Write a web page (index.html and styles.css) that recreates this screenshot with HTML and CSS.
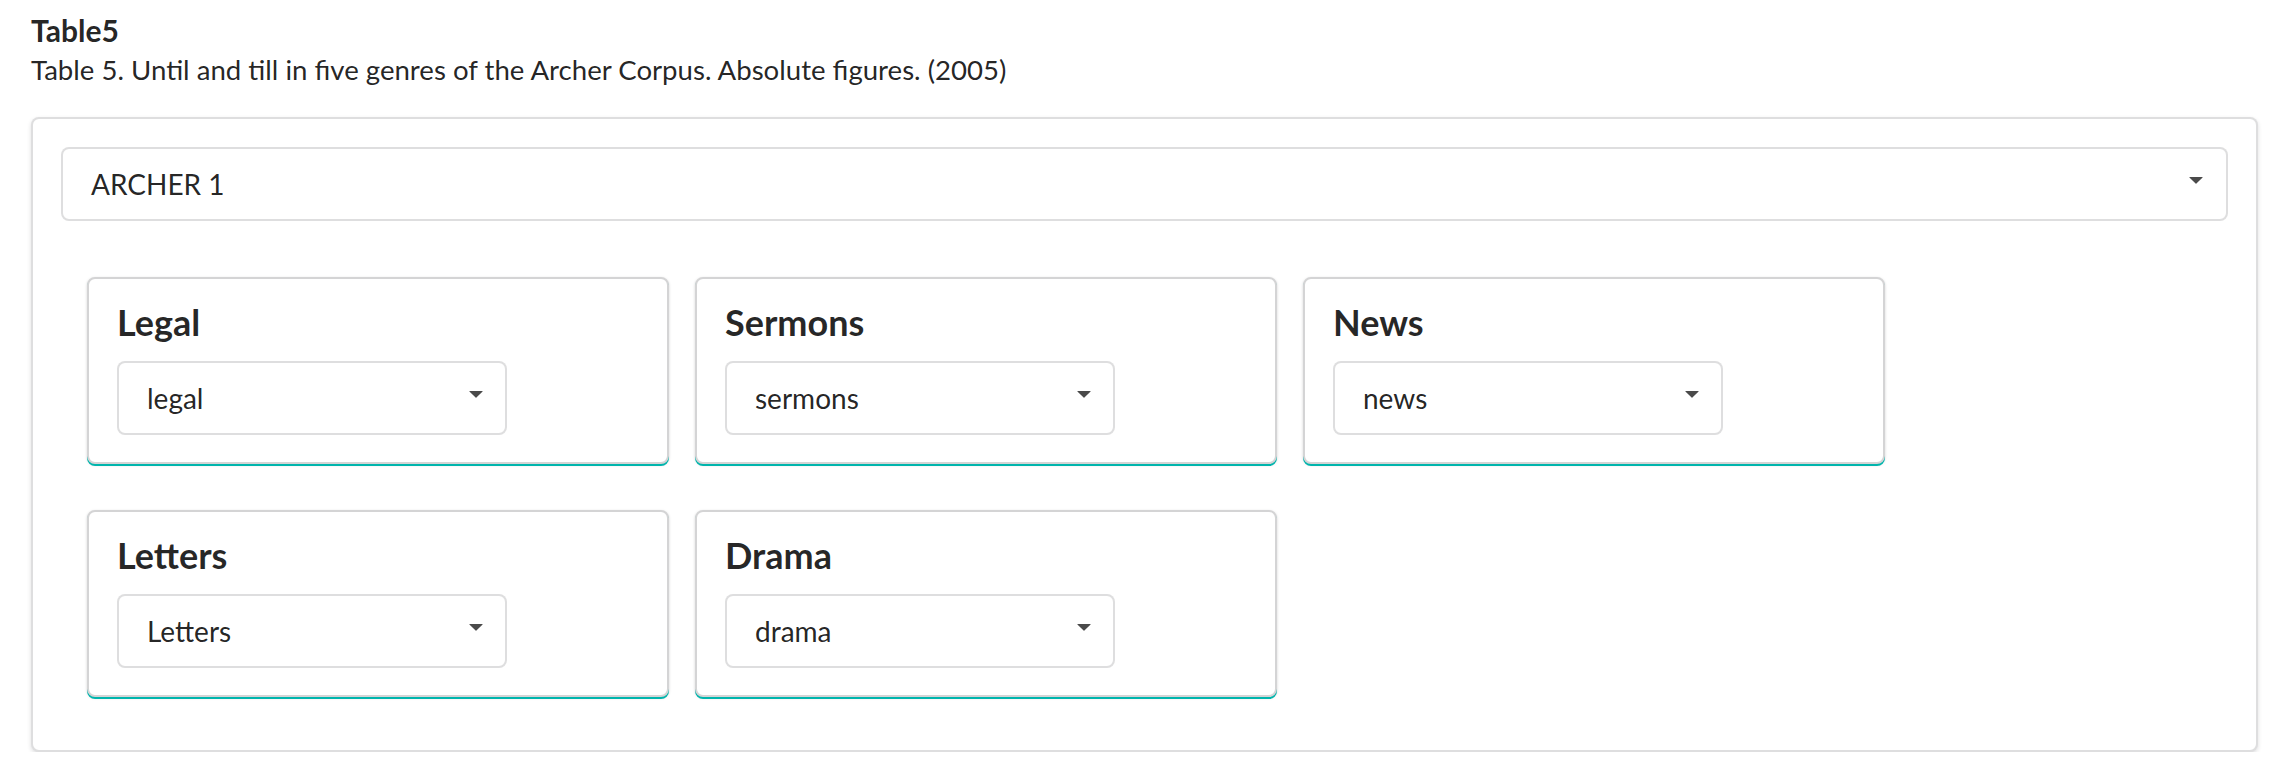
FILE: index.html
```html
<!DOCTYPE html>
<html lang="en">
<head>
<meta charset="utf-8">
<title>Table5</title>
<link rel="stylesheet" href="styles.css">
</head>
<body>
  <div class="page">
    <h4 class="title">Table5</h4>
    <p class="subtitle">Table 5. Until and till in five genres of the Archer Corpus. Absolute figures. (2005)</p>
    <div class="segment">
      <div class="dropdown">
        <span class="dropdown-text">ARCHER 1</span>
        <svg class="caret" width="14" height="7" viewBox="0 0 14 7"><path d="M0.5 0 H13.5 Q14 0 13.6 0.4 L7.4 6.6 Q7 7 6.6 6.6 L0.4 0.4 Q0 0 0.5 0 Z" fill="#4a4a4a"/></svg>
      </div>
      <div class="cards">
        <div class="card">
          <div class="card-header">Legal</div>
          <div class="dropdown small">
            <span class="dropdown-text">legal</span>
            <svg class="caret" width="14" height="7" viewBox="0 0 14 7"><path d="M0.5 0 H13.5 Q14 0 13.6 0.4 L7.4 6.6 Q7 7 6.6 6.6 L0.4 0.4 Q0 0 0.5 0 Z" fill="#4a4a4a"/></svg>
          </div>
        </div>
        <div class="card">
          <div class="card-header">Sermons</div>
          <div class="dropdown small">
            <span class="dropdown-text">sermons</span>
            <svg class="caret" width="14" height="7" viewBox="0 0 14 7"><path d="M0.5 0 H13.5 Q14 0 13.6 0.4 L7.4 6.6 Q7 7 6.6 6.6 L0.4 0.4 Q0 0 0.5 0 Z" fill="#4a4a4a"/></svg>
          </div>
        </div>
        <div class="card">
          <div class="card-header">News</div>
          <div class="dropdown small">
            <span class="dropdown-text">news</span>
            <svg class="caret" width="14" height="7" viewBox="0 0 14 7"><path d="M0.5 0 H13.5 Q14 0 13.6 0.4 L7.4 6.6 Q7 7 6.6 6.6 L0.4 0.4 Q0 0 0.5 0 Z" fill="#4a4a4a"/></svg>
          </div>
        </div>
        <div class="card">
          <div class="card-header">Letters</div>
          <div class="dropdown small">
            <span class="dropdown-text">Letters</span>
            <svg class="caret" width="14" height="7" viewBox="0 0 14 7"><path d="M0.5 0 H13.5 Q14 0 13.6 0.4 L7.4 6.6 Q7 7 6.6 6.6 L0.4 0.4 Q0 0 0.5 0 Z" fill="#4a4a4a"/></svg>
          </div>
        </div>
        <div class="card">
          <div class="card-header">Drama</div>
          <div class="dropdown small">
            <span class="dropdown-text">drama</span>
            <svg class="caret" width="14" height="7" viewBox="0 0 14 7"><path d="M0.5 0 H13.5 Q14 0 13.6 0.4 L7.4 6.6 Q7 7 6.6 6.6 L0.4 0.4 Q0 0 0.5 0 Z" fill="#4a4a4a"/></svg>
          </div>
        </div>
      </div>
    </div>
  </div>
</body>
</html>
```
FILE: styles.css
```css
* {
  box-sizing: border-box;
}

html, body {
  margin: 0;
  padding: 0;
  background: #ffffff;
}

body {
  font-family: Lato, "Open Sans", "Liberation Sans", sans-serif;
  color: rgba(0, 0, 0, 0.87);
}

.page {
  padding: 10px 28px 0 31px;
}

.title {
  margin: 0;
  font-size: 30px;
  line-height: 40px;
  font-weight: 700;
  color: rgba(0, 0, 0, 0.87);
}

.subtitle {
  margin: 0;
  font-size: 27.6px;
  line-height: 40px;
  font-weight: 400;
  color: rgba(0, 0, 0, 0.87);
}

.segment {
  margin-top: 27px;
  border: 2px solid rgba(34, 36, 38, 0.15);
  border-radius: 8px;
  box-shadow: 0 2px 4px 0 rgba(34, 36, 38, 0.15);
  padding: 28px;
  background: #fff;
}

.dropdown {
  display: flex;
  align-items: center;
  justify-content: space-between;
  height: 74px;
  border: 2px solid rgba(34, 36, 38, 0.15);
  border-radius: 8px;
  padding: 0 23px 0 28px;
  font-size: 28px;
  line-height: 34px;
  color: rgba(0, 0, 0, 0.87);
  background: #fff;
}

.dropdown.small {
  width: 390px;
  padding-right: 22px;
}

.caret {
  display: block;
  flex: none;
  margin-bottom: 7px;
}

.cards {
  display: flex;
  flex-wrap: wrap;
  column-gap: 26px;
  row-gap: 46px;
  margin-top: 56px;
  padding-left: 26px;
  padding-bottom: 25px;
}

.card {
  width: 582px;
  border: 2px solid #d4d4d5;
  border-radius: 8px;
  padding: 22px 28px 27px;
  background: #fff;
  box-shadow: 0 2px 0 0 #00b5ad, 0 1px 3px 0 #d4d4d5;
}

.card-header {
  font-size: 36px;
  line-height: 43px;
  font-weight: 700;
  color: rgba(0, 0, 0, 0.85);
  margin-bottom: 17px;
}
```
